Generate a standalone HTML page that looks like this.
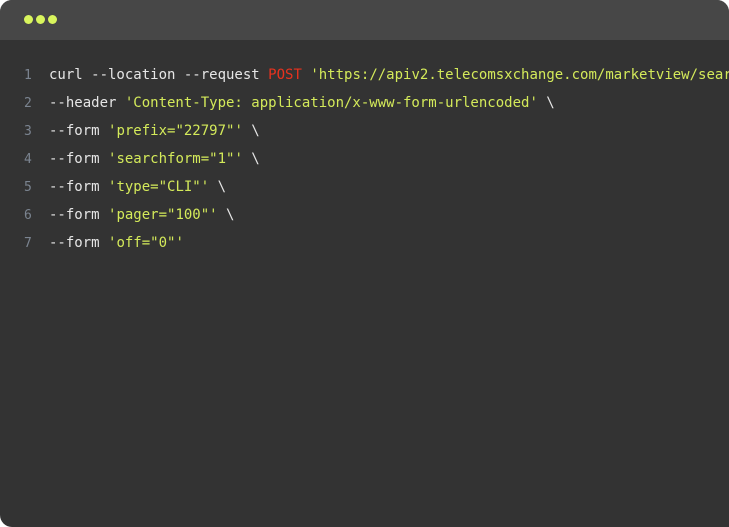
<!DOCTYPE html>
<html><head><style>
html,body{margin:0;padding:0;background:#fff;}
.win{position:absolute;left:0;top:0;width:729px;height:527px;background:#333333;border-radius:12px 12px 0 12px;overflow:hidden;}
.bar{height:40px;background:#474747;position:relative;}
.dot{position:absolute;top:15px;width:9px;height:9px;border-radius:50%;background:#d9f55d;}
.code{position:absolute;top:61px;left:0;font-family:"DejaVu Sans Mono","Liberation Mono",monospace;font-size:14px;color:#e6e6e6;}
.l{height:28px;line-height:28px;white-space:pre;}
.n{display:inline-block;width:49px;text-align:left;padding-left:24px;box-sizing:border-box;color:#7b8490;font-size:13px;}
.s{color:#d4ea5a;}
.k{color:#e8321e;}
</style></head><body>
<div class="win">
<div class="bar"><div class="dot" style="left:24px"></div><div class="dot" style="left:36px"></div><div class="dot" style="left:48px"></div></div>
<div class="code"><div class="l"><span class="n">1</span>curl --location --request <span class="k">POST</span> <span class="s">'https://apiv2.telecomsxchange.com/marketview/search'</span> \</div><div class="l"><span class="n">2</span>--header <span class="s">'Content-Type: application/x-www-form-urlencoded'</span> \</div><div class="l"><span class="n">3</span>--form <span class="s">'prefix="22797"'</span> \</div><div class="l"><span class="n">4</span>--form <span class="s">'searchform="1"'</span> \</div><div class="l"><span class="n">5</span>--form <span class="s">'type="CLI"'</span> \</div><div class="l"><span class="n">6</span>--form <span class="s">'pager="100"'</span> \</div><div class="l"><span class="n">7</span>--form <span class="s">'off="0"'</span></div></div>
</div>
</body></html>
